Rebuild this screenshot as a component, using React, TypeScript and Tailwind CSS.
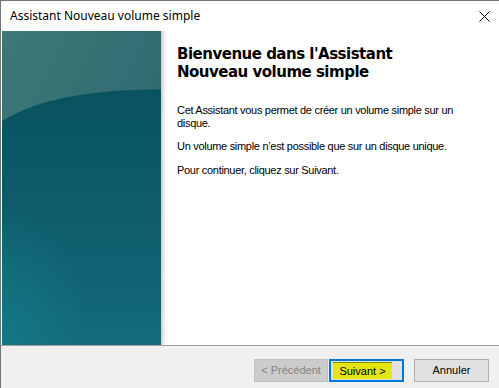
import React from "react";

function TealPanel() {
  return (
    <svg width="159" height="314" viewBox="0 0 159 314" className="block">
      <defs>
        <linearGradient id="up" x1="0" y1="0" x2="1" y2="1">
          <stop offset="0" stopColor="#3d7878" />
          <stop offset="1" stopColor="#2a626c" />
        </linearGradient>
        <linearGradient id="low" x1="0" y1="0" x2="0" y2="1">
          <stop offset="0" stopColor="#09525f" />
          <stop offset="0.5" stopColor="#0e5d6c" />
          <stop offset="1" stopColor="#136b7c" />
        </linearGradient>
        <radialGradient id="bl" cx="0" cy="1" r="0.55">
          <stop offset="0" stopColor="#147a84" stopOpacity="0.85" />
          <stop offset="1" stopColor="#147a84" stopOpacity="0" />
        </radialGradient>
      </defs>
      <rect x="0" y="0" width="159" height="314" fill="url(#up)" />
      <path d="M0 90 C 30 72, 70 59, 159 58 L159 314 L0 314 Z" fill="url(#low)" />
      <path d="M0 90 C 30 72, 70 59, 159 58 L159 314 L0 314 Z" fill="url(#bl)" />
      <path d="M0 90 C 30 72, 70 59, 159 58" fill="none" stroke="#3a7275" strokeOpacity="0.4" strokeWidth="1" />
    </svg>
  );
}

export default function App() {
  return (
    <div className="w-[499px] h-[388px] overflow-hidden bg-white flex flex-col border-l border-t border-[#747474]">
      <div className="h-[30px] flex items-center justify-between pl-[9px] pr-[9px] shrink-0">
        <span className="text-[12px] text-black leading-none" style={{ fontFamily: '"Noto Sans", "Open Sans", sans-serif' }}>
          Assistant Nouveau volume simple
        </span>
        <svg width="11" height="11" viewBox="0 0 11 11" className="block">
          <path d="M0.5 0.5 L10.5 10.5 M10.5 0.5 L0.5 10.5" stroke="#000" strokeWidth="1" />
        </svg>
      </div>
      <div className="h-[314px] flex shrink-0">
        <div className="ml-px">
          <TealPanel />
        </div>
        <div className="w-[5px] bg-gradient-to-r from-[#cdcdcd] to-white" />
        <div className="flex-1 pl-[11px] pt-[14px]">
          <h1 className="text-[15px] leading-[18px] font-bold text-black tracking-[-0.5px]" style={{ fontFamily: '"DejaVu Sans", Verdana, sans-serif' }}>
            Bienvenue dans l'Assistant
            <br />
            Nouveau volume simple
          </h1>
          <div className="text-[11px] leading-[13px] text-black tracking-[-0.3px]" style={{ fontFamily: '"Liberation Sans", Arial, sans-serif' }}>
            <p className="mt-[23px]">
              Cet Assistant vous permet de créer un volume simple sur un
              <br />
              disque.
            </p>
            <p className="mt-[10px]">Un volume simple n’est possible que sur un disque unique.</p>
            <p className="mt-[11px]">Pour continuer, cliquez sur Suivant.</p>
          </div>
        </div>
      </div>
      <div className="flex-1 border-t border-[#a0a0a0] bg-[#f0f0f0] flex items-start justify-end pt-[13px] pr-[10px]" style={{ fontFamily: '"Liberation Sans", Arial, sans-serif' }}>
        <button className="w-[74px] h-[23px] border border-[#bfbfbf] bg-[#cccccc] text-[11px] text-[#838383] flex items-center justify-center">
          &lt; Précédent
        </button>
        <button className="ml-px w-[75px] h-[23px] border-2 border-[#0078d7] bg-[#e1e1e1] text-[11px] text-black flex items-center pl-[2px]">
          <span className="w-[59px] h-[17px] bg-[#e4e612] border-t border-[#7f8f00] flex items-center justify-center">
            Suivant &gt;
          </span>
        </button>
        <button className="ml-[10px] w-[75px] h-[23px] border border-[#adadad] bg-[#e1e1e1] text-[11px] text-black flex items-center justify-center">
          Annuler
        </button>
      </div>
    </div>
  );
}
